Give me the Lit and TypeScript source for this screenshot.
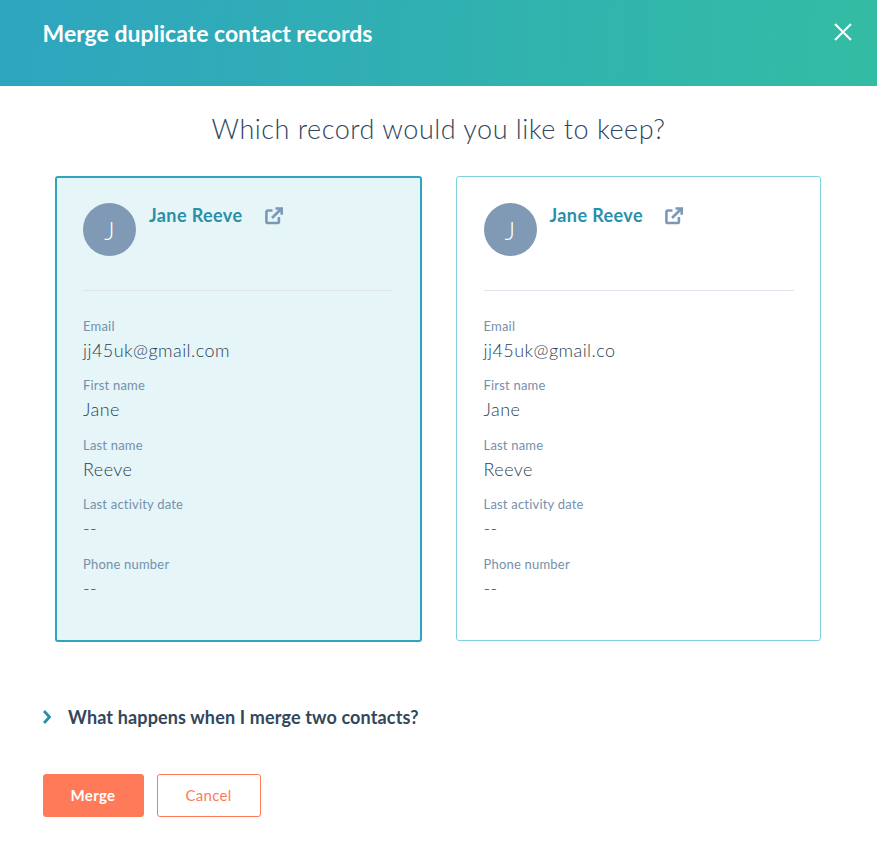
import { LitElement, html, css } from "lit";
import { customElement } from "lit/decorators.js";

const F = [
  ["Email", "jj45uk@gmail.com"],
  ["First name", "Jane"],
  ["Last name", "Reeve"],
  ["Last activity date", "--"],
  ["Phone number", "--"],
];

@customElement("app-root")
export class AppRoot extends LitElement {
  static styles = css`
    :host { display: block; width: 877px; height: 842px; background: #fff; font-family: Lato, "Open Sans", sans-serif; color: #33475b; overflow: hidden; }
    .hdr { height: 86px; box-sizing: border-box; padding: 0 24px 0 42.5px; display: flex; justify-content: space-between; align-items: flex-start;
      background: linear-gradient(95deg, #2ea5bf 0%, #33bca4 100%); color: #fff; }
    .hdr h1 { margin: 18px 0 0; font-size: 23px; line-height: 30px; font-weight: 700; }
    .x { margin-top: 22px; display: block; }
    h2 { margin: 25px 0 0; text-align: center; font-size: 27px; line-height: 36px; font-weight: 300; letter-spacing: .52px; color: #2f4560; }
    .cards { display: flex; align-items: flex-start; margin: 29px 0 0 55px; gap: 34px; }
    .card { box-sizing: border-box; width: 365px; height: 465px; border: 1px solid #7fd1de; border-radius: 3px; padding: 26px 26px 0 26.500px; background: #fff; }
    .card.sel { width: 367px; height: 466px; border: 2px solid #2ea5bf; background: #e5f5f8; padding: 25px 28px 0 26px; }
    .top { display: flex; align-items: flex-start; height: 87px; border-bottom: 1px solid #dfe3eb; }
    .av { width: 53px; height: 53px; border-radius: 50%; background: #8099b4; color: #fff; font-size: 25px; font-weight: 300; display: flex; align-items: center; justify-content: center; flex: none; }
    .name { margin: 2px 0 0 13px; font-size: 18px; line-height: 20px; font-weight: 700; color: #2a8fa9; width: 92.500px; white-space: nowrap; letter-spacing: .4px; }
    .ext { margin: 4px 0 0 23px; display: block; }
    .fields { padding-top: 26.600px; }
    .f { height: 59.500px; }
    .l { font-size: 13px; line-height: 16px; color: #7690ab; letter-spacing: .2px; }
    .v { font-size: 18px; line-height: 24px; font-weight: 300; margin-top: 4px; color: #2b3f55; letter-spacing: .45px; }
    .more { display: flex; align-items: center; margin: 64px 0 0 43px; height: 22px; font-size: 18px; font-weight: 700; color: #33475b; letter-spacing: .14px; }
    .more svg { display: block; margin-right: 17px; }
    .btns { display: flex; gap: 13px; margin: 46px 0 0 43px; }
    .btn { box-sizing: border-box; height: 43px; border-radius: 3px; font: 400 15px Lato, sans-serif; display: flex; align-items: center; justify-content: center; letter-spacing: .3px; padding-bottom: 1px; padding-right: 1px; }
    .merge { width: 101px; background: #ff7a59; color: #fff; border: 1px solid #ff7a59; font-weight: 700; }
    .cancel { width: 104px; background: #fff; color: #ff7a59; border: 1px solid #ff7a59; }
  `;

  card(sel: boolean, email: string) {
    return html`<div class="card ${sel ? "sel" : ""}">
      <div class="top">
        <div class="av">J</div>
        <div class="name">Jane Reeve</div>
        <svg class="ext" width="18" height="18" viewBox="0 0 18 18" fill="none" stroke="#7c98b6" stroke-width="2.6">
          <path d="M7.500 3.500H3a1.600 1.600 0 0 0-1.600 1.600v9.300A1.600 1.600 0 0 0 3 16h9.300a1.600 1.600 0 0 0 1.600-1.600V10" />
          <path d="M7 11 15.500 2.500M10.500 1.500h6.200v6.200" />
        </svg>
      </div>
      <div class="fields">
        ${F.map(([l, v], i) => html`<div class="f"><div class="l">${l}</div><div class="v">${i === 0 ? email : v}</div></div>`)}
      </div>
    </div>`;
  }

  render() {
    return html`
      <div class="hdr">
        <h1>Merge duplicate contact records</h1>
        <svg class="x" width="20" height="20" viewBox="0 0 20 20" stroke="#fff" stroke-width="2" fill="none"><path d="M2 2 18 18M18 2 2 18" /></svg>
      </div>
      <h2>Which record would you like to keep?</h2>
      <div class="cards">
        ${this.card(true, "jj45uk@gmail.com")}
        ${this.card(false, "jj45uk@gmail.co")}
      </div>
      <div class="more">
        <svg width="8" height="14" viewBox="0 0 8 14" fill="none" stroke="#2a8fa9" stroke-width="2.8"><path d="M1 1l5.500 6L1 13" /></svg>
        What happens when I merge two contacts?
      </div>
      <div class="btns">
        <div class="btn merge">Merge</div>
        <div class="btn cancel">Cancel</div>
      </div>
    `;
  }
}
